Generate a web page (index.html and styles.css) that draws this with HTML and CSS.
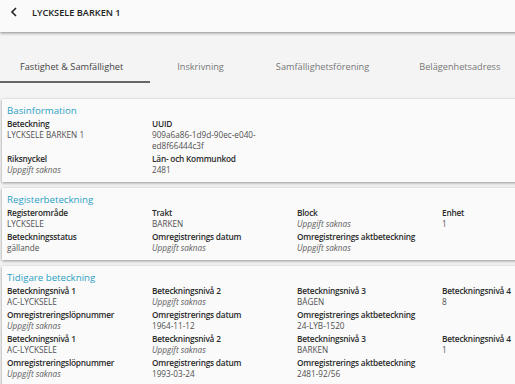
FILE: index.html
```html
<!DOCTYPE html>
<html lang="sv">
<head>
<meta charset="utf-8">
<title>LYCKSELE BARKEN 1</title>
<link rel="stylesheet" href="styles.css">
</head>
<body>
<div class="page">
  <header class="topbar">
    <svg class="back" width="8" height="10" viewBox="0 0 8 10"><path d="M6 1 L2 5 L6 9" fill="none" stroke="#222" stroke-width="1.6"/></svg>
    <span class="title">LYCKSELE BARKEN 1</span>
  </header>
  <nav class="tabs">
    <div class="tab active">Fastighet &amp; Samfällighet</div>
    <div class="tab t2">Inskrivning</div>
    <div class="tab t3">Samfällighetsförening</div>
    <div class="tab t4">Belägenhetsadress</div>
  </nav>

  <section class="card">
    <h2>Basinformation</h2>
    <div class="grid">
      <div class="item"><div class="label">Beteckning</div><div class="value">LYCKSELE BARKEN 1</div></div>
      <div class="item"><div class="label">UUID</div><div class="value uuid">909a6a86-1d9d-90ec-e040-ed8f66444c3f</div></div>
    </div>
    <div class="grid">
      <div class="item"><div class="label">Riksnyckel</div><div class="value missing">Uppgift saknas</div></div>
      <div class="item"><div class="label">Län- och Kommunkod</div><div class="value">2481</div></div>
    </div>
  </section>

  <section class="card">
    <h2>Registerbeteckning</h2>
    <div class="grid">
      <div class="item"><div class="label">Registerområde</div><div class="value">LYCKSELE</div></div>
      <div class="item"><div class="label">Trakt</div><div class="value">BARKEN</div></div>
      <div class="item"><div class="label">Block</div><div class="value missing">Uppgift saknas</div></div>
      <div class="item"><div class="label">Enhet</div><div class="value">1</div></div>
    </div>
    <div class="grid">
      <div class="item"><div class="label">Beteckningsstatus</div><div class="value">gällande</div></div>
      <div class="item"><div class="label">Omregistrerings datum</div><div class="value missing">Uppgift saknas</div></div>
      <div class="item"><div class="label">Omregistrerings aktbeteckning</div><div class="value missing">Uppgift saknas</div></div>
    </div>
  </section>

  <section class="card">
    <h2>Tidigare beteckning</h2>
    <div class="grid">
      <div class="item"><div class="label">Beteckningsnivå 1</div><div class="value">AC-LYCKSELE</div></div>
      <div class="item"><div class="label">Beteckningsnivå 2</div><div class="value missing">Uppgift saknas</div></div>
      <div class="item"><div class="label">Beteckningsnivå 3</div><div class="value">BÅGEN</div></div>
      <div class="item"><div class="label">Beteckningsnivå 4</div><div class="value">8</div></div>
    </div>
    <div class="grid">
      <div class="item"><div class="label">Omregistreringslöpnummer</div><div class="value missing">Uppgift saknas</div></div>
      <div class="item"><div class="label">Omregistrerings datum</div><div class="value">1964-11-12</div></div>
      <div class="item"><div class="label">Omregistrerings aktbeteckning</div><div class="value">24-LYB-1520</div></div>
    </div>
    <div class="grid">
      <div class="item"><div class="label">Beteckningsnivå 1</div><div class="value">AC-LYCKSELE</div></div>
      <div class="item"><div class="label">Beteckningsnivå 2</div><div class="value missing">Uppgift saknas</div></div>
      <div class="item"><div class="label">Beteckningsnivå 3</div><div class="value">BARKEN</div></div>
      <div class="item"><div class="label">Beteckningsnivå 4</div><div class="value">1</div></div>
    </div>
    <div class="grid">
      <div class="item"><div class="label">Omregistreringslöpnummer</div><div class="value missing">Uppgift saknas</div></div>
      <div class="item"><div class="label">Omregistrerings datum</div><div class="value">1993-03-24</div></div>
      <div class="item"><div class="label">Omregistrerings aktbeteckning</div><div class="value">2481-92/56</div></div>
    </div>
  </section>
</div>
</body>
</html>
```
FILE: styles.css
```css
html, body {
  margin: 0;
  padding: 0;
  overflow: hidden;
  background: #f4f4f4;
  font-family: "Open Sans", "Liberation Sans", sans-serif;
}
.page {
  width: 660px;
}
.topbar {
  box-sizing: border-box;
  height: 32px;
  padding: 0 0 8px 10px;
  background: #fafafa;
  box-shadow: 0 1px 3px rgba(0,0,0,0.45);
  display: flex;
  align-items: center;
  position: relative;
  z-index: 1;
}
.back {
  margin-right: 14px;
}
.title {
  font-size: 9.2px;
  font-weight: 600;
  color: #222;
}
.tabs {
  display: flex;
  margin-top: 21px;
  background: #f4f4f4;
}
.tab {
  font-size: 9.2px;
  color: #777;
  line-height: 28px;
  height: 28px;
  border-bottom: 2px solid transparent;
  white-space: nowrap;
}
.tab.active {
  color: #444;
  border-bottom-color: #666;
  padding: 0 27px 0 20px;
}
.tab.t2 { padding: 0 25px 0 27px; }
.tab.t3 { padding: 0 25px 0 27px; }
.tab.t4 { padding: 0 24px 0 25px; }
.card {
  background: #fafafa;
  margin: 16px 0 0 2px;
  padding: 5px 0 7px 5px;
  box-shadow: 0 1px 3px rgba(0,0,0,0.4);
}
.card + .card {
  margin-top: 6px;
}
.card h2 {
  margin: 0;
  font-size: 9.7px;
  font-weight: 500;
  line-height: 14px;
  color: #2a9fc4;
}
.grid {
  display: grid;
  grid-template-columns: repeat(4, 145px);
  margin-bottom: 2px;
}
.grid:last-child {
  margin-bottom: 0;
}
.item {
  padding-right: 8px;
}
.label {
  font-size: 8.3px;
  font-weight: 600;
  letter-spacing: -0.22px;
  line-height: 11px;
  color: #2a2a2a;
  white-space: nowrap;
}
.value {
  font-size: 8.2px;
  line-height: 11px;
  color: #505050;
}
.value.missing {
  font-style: italic;
  color: #606060;
}
.uuid {
  width: 110px;
}
```
